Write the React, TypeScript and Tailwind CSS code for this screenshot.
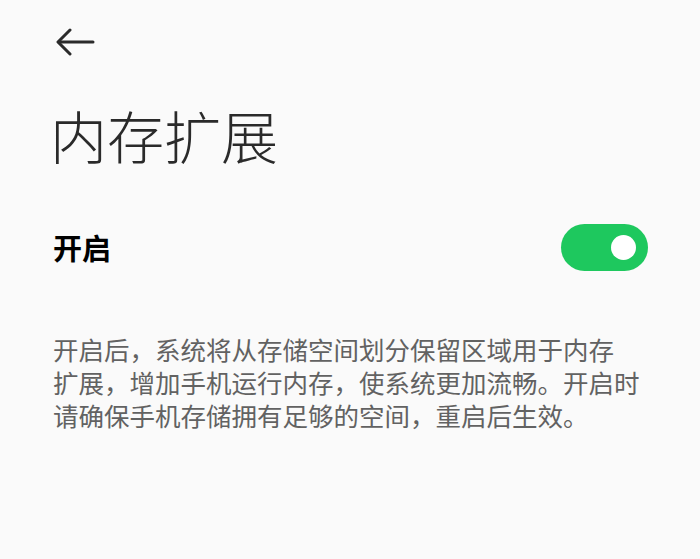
import React, { useState } from 'react';

function BackArrow() {
    return (
        <svg width="40" height="28" viewBox="0 0 40 28" fill="none" stroke="#2b2b2b" strokeWidth="3" strokeLinecap="round" strokeLinejoin="round">
            <path d="M37 14H3" />
            <path d="M14 2L2 14l12 12" />
        </svg>
    );
}

function Toggle(props: { on: boolean, onChange: (v: boolean) => void }) {
    return (
        <button
            className={props.on
                ? 'w-[87px] h-[47px] rounded-full bg-[#1ec85e] flex items-center justify-end pr-[12px]'
                : 'w-[87px] h-[47px] rounded-full bg-[#d6d6d6] flex items-center justify-start pl-[12px]'}
            onClick={() => props.onChange(!props.on)}
        >
            <span className="block w-[25px] h-[25px] rounded-full bg-white" />
        </button>
    );
}

export default function App() {
    const [enabled, setEnabled] = useState(true);

    return (
        <div className="w-[700px] h-[559px] bg-[#fafafa] overflow-hidden" style={{ fontFamily: '"Noto Sans CJK SC", "Noto Sans", sans-serif' }}>
            <div className="pl-[56px] pt-[28px]">
                <BackArrow />
            </div>
            <h1 className="pl-[50px] mt-[46px] text-[57px] leading-[64px] font-light text-[#2a2a2a]">内存扩展</h1>
            <div className="flex items-center justify-between pl-[53px] pr-[52px] mt-[58px]">
                <span className="text-[29px] font-bold text-black">开启</span>
                <Toggle on={enabled} onChange={setEnabled} />
            </div>
            <p className="pl-[53px] mt-[61px] text-[25.5px] leading-[33px] text-[#626262] whitespace-nowrap">
                开启后，系统将从存储空间划分保留区域用于内存<br />
                扩展，增加手机运行内存，使系统更加流畅。开启时<br />
                请确保手机存储拥有足够的空间，重启后生效。
            </p>
        </div>
    );
}
